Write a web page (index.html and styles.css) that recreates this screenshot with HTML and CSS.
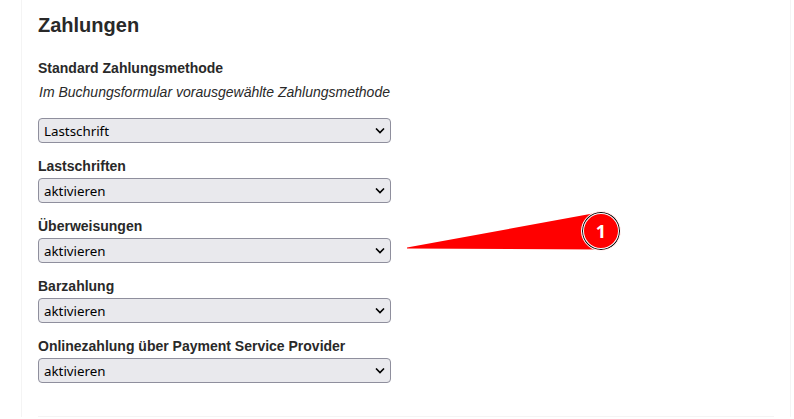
FILE: index.html
```html
<!DOCTYPE html>
<html lang="de">
<head>
  <meta charset="UTF-8" />
  <meta name="viewport" content="width=device-width, initial-scale=1" />
  <title>Zahlungen</title>
  <link rel="stylesheet" href="styles.css">
</head>
<body>
  <main class="panel">
    <form class="payments">
      <h2>Zahlungen</h2>
      <div class="field">
        <label for="standard">Standard Zahlungsmethode</label>
        <p class="hint" id="standard-hint">Im Buchungsformular vorausgewählte Zahlungsmethode</p>
        <div class="select">
          <select id="standard" aria-describedby="standard-hint">
            <option>Lastschrift</option>
          </select>
          <svg class="arrow" viewBox="0 0 10 6" aria-hidden="true"><path d="M1 .5l4 4 4-4" /></svg>
        </div>
      </div>
      <div class="field">
        <label for="lastschriften">Lastschriften</label>
        <div class="select">
          <select id="lastschriften">
            <option>aktivieren</option>
          </select>
          <svg class="arrow" viewBox="0 0 10 6" aria-hidden="true"><path d="M1 .5l4 4 4-4" /></svg>
        </div>
      </div>
      <div class="field">
        <label for="ueberweisungen">Überweisungen</label>
        <div class="select">
          <select id="ueberweisungen">
            <option>aktivieren</option>
          </select>
          <svg class="arrow" viewBox="0 0 10 6" aria-hidden="true"><path d="M1 .5l4 4 4-4" /></svg>
          <div class="callout">
            <svg class="pointer" viewBox="0 0 194 40" aria-hidden="true"><path d="M0 36.500L194 1v37.500L0 37.500z" /></svg>
            <span class="number">1</span>
          </div>
        </div>
      </div>
      <div class="field">
        <label for="barzahlung">Barzahlung</label>
        <div class="select">
          <select id="barzahlung">
            <option>aktivieren</option>
          </select>
          <svg class="arrow" viewBox="0 0 10 6" aria-hidden="true"><path d="M1 .5l4 4 4-4" /></svg>
        </div>
      </div>
      <div class="field">
        <label for="online">Onlinezahlung über Payment Service Provider</label>
        <div class="select">
          <select id="online">
            <option>aktivieren</option>
          </select>
          <svg class="arrow" viewBox="0 0 10 6" aria-hidden="true"><path d="M1 .5l4 4 4-4" /></svg>
        </div>
      </div>
    </form>
  </main>
</body>
</html>
```
FILE: styles.css
```css
* {
  box-sizing: border-box;
}
body {
  margin: 0;
  background: #fff;
  color: #292929;
  font-family: "Liberation Sans", Arial, sans-serif;
  font-size: 14px;
  line-height: 20px;
}
.panel {
  margin: 0 3px 0 21px;
  padding: 0 16px;
  border: solid #f4f4f4;
  border-width: 0 1px;
}
.payments {
  padding: 10px 0 33px;
  border-bottom: 1px solid #f4f4f4;
}
h2 {
  margin: 0 0 18px;
  font-size: 20px;
  line-height: 30px;
}
.field {
  margin-bottom: 13px;
}
.field:last-child {
  margin-bottom: 0;
}
label {
  display: block;
  margin-bottom: 2px;
  font-weight: bold;
}
.hint {
  margin: 4px 0 16px;
  padding-left: 1px;
  font-style: italic;
}
.select {
  position: relative;
  max-width: 353px;
}
select {
  display: block;
  width: 100%;
  height: 25px;
  padding: 0 24px 0 5px;
  border: 1px solid #8f8f9d;
  border-radius: 4px;
  background: #e9e9ed;
  color: #000;
  font-family: "Noto Sans", sans-serif;
  appearance: none;
}
.arrow {
  position: absolute;
  top: 10px;
  right: 6px;
  width: 10px;
  height: 6px;
  fill: none;
  stroke: #000;
  stroke-width: 1.6;
  pointer-events: none;
}
/* numbered marker beside the field */
.callout {
  position: absolute;
  left: 100%;
  bottom: 12px;
  display: flex;
  margin-left: 16px;
}
.pointer {
  width: 194px;
  height: 40px;
  fill: #f00;
}
.number {
  width: 40px;
  height: 40px;
  margin-left: -20px;
  border: 1px solid #fff;
  border-radius: 50%;
  background: #f00;
  box-shadow: inset 0 0 0 1px #000, inset 0 0 0 2px #fff;
  color: #fff;
  font: bold 18px/38px "Noto Sans", sans-serif;
  text-align: center;
}
```
